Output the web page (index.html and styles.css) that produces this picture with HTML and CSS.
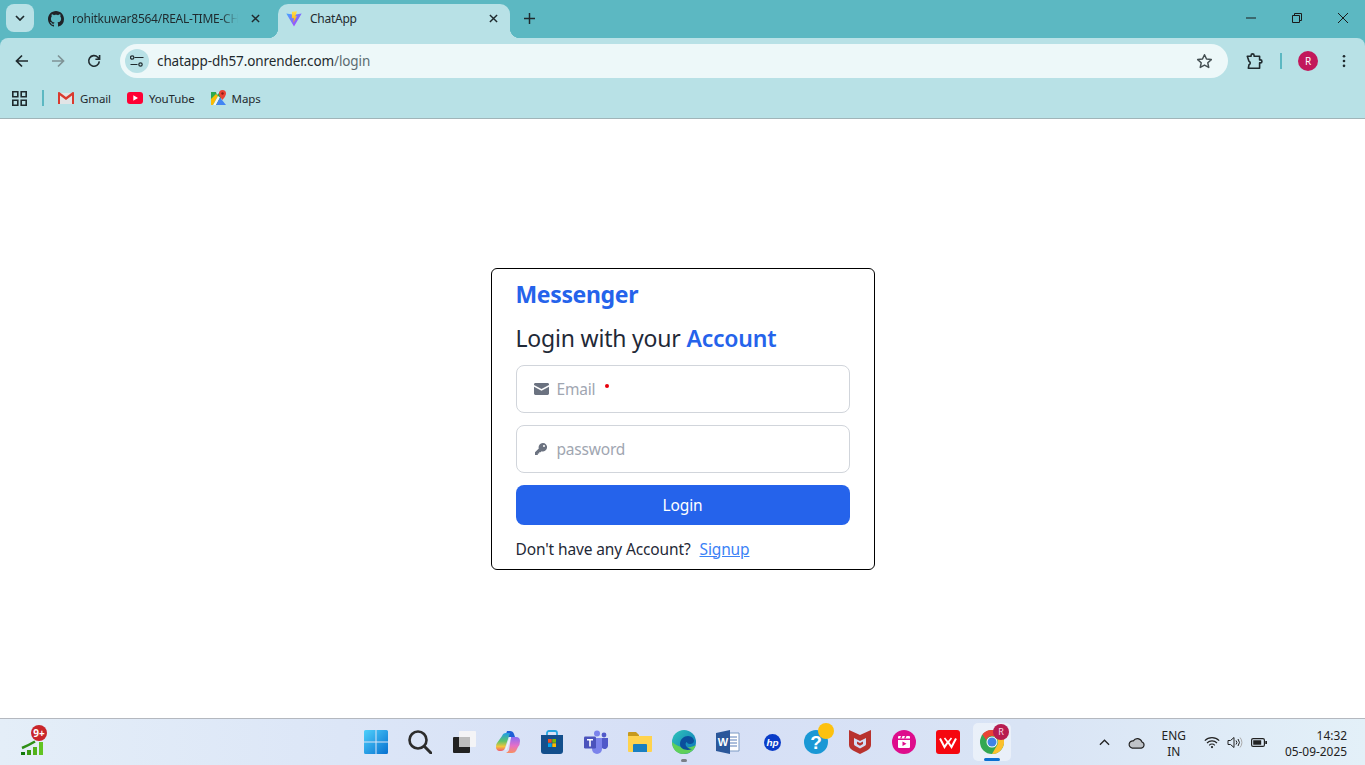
FILE: index.html
```html
<!DOCTYPE html>
<html lang="en">
<head>
<meta charset="utf-8">
<title>ChatApp</title>
<link rel="stylesheet" href="styles.css">
</head>
<body>
<header class="chrome">
  <div class="tabstrip">
    <button class="tabsearch"><svg width="10" height="6" viewBox="0 0 10 6"><path d="M1 1l4 4 4-4" fill="none" stroke="#1f2a2e" stroke-width="1.7"/></svg></button>
    <div class="tab">
      <svg class="fav" viewBox="0 0 16 16"><path fill="#1f2328" d="M8 0C3.58 0 0 3.58 0 8c0 3.54 2.29 6.53 5.47 7.59.4.07.55-.17.55-.38 0-.19-.01-.82-.01-1.49-2.01.37-2.53-.49-2.69-.94-.09-.23-.48-.94-.82-1.13-.28-.15-.68-.52-.01-.53.63-.01 1.08.58 1.23.82.72 1.21 1.87.87 2.33.66.07-.52.28-.87.51-1.07-1.78-.2-3.64-.89-3.64-3.95 0-.87.31-1.59.82-2.15-.08-.2-.36-1.02.08-2.12 0 0 .67-.21 2.2.82.64-.18 1.32-.27 2-.27s1.36.09 2 .27c1.53-1.04 2.2-.82 2.2-.82.44 1.1.16 1.92.08 2.12.51.56.82 1.27.82 2.15 0 3.07-1.87 3.75-3.65 3.95.29.25.54.73.54 1.48 0 1.07-.01 1.93-.01 2.2 0 .21.15.46.55.38A8.013 8.013 0 0016 8c0-4.42-3.58-8-8-8z"/></svg>
      <span class="tabtitle fade">rohitkuwar8564/REAL-TIME-CH</span>
      <svg class="close" viewBox="0 0 10 10"><path d="M1 1l8 8M9 1l-8 8" stroke="#1f2a2e" stroke-width="1.6"/></svg>
    </div>
    <div class="tab active">
      <svg class="fav" viewBox="0 0 16 16">
        <defs>
          <linearGradient id="vb" x1="0" y1="0" x2="1" y2="1"><stop offset="0" stop-color="#41a8ff"/><stop offset="1" stop-color="#bd34fe"/></linearGradient>
          <linearGradient id="vy" x1="0" y1="0" x2="0" y2="1"><stop offset="0" stop-color="#ffe14d"/><stop offset="1" stop-color="#ffa800"/></linearGradient>
        </defs>
        <path fill="url(#vb)" d="M.3 2.4L8 15.4 15.7 2.4 8.2 3.7z"/>
        <path fill="url(#vy)" d="M6 .8l4.9-.6-1.6 5.2 1.7-.3L7.3 12l.6-5.1-2 .3z"/>
      </svg>
      <span class="tabtitle">ChatApp</span>
      <svg class="close" viewBox="0 0 10 10"><path d="M1 1l8 8M9 1l-8 8" stroke="#1f2a2e" stroke-width="1.6"/></svg>
    </div>
    <svg class="newtab" viewBox="0 0 12 12"><path d="M6 0v12M0 6h12" stroke="#1f2a2e" stroke-width="1.6"/></svg>
    <div class="winbtns">
      <svg width="10" height="10" viewBox="0 0 10 10"><path d="M0 5h10" stroke="#1a1a1a"/></svg>
      <svg width="10" height="10" viewBox="0 0 10 10"><path d="M.5 2.5h7v7h-7zM2.5 2.5V.5h7v7h-2" fill="none" stroke="#1a1a1a"/></svg>
      <svg width="10" height="10" viewBox="0 0 10 10"><path d="M0 0l10 10M10 0L0 10" stroke="#1a1a1a"/></svg>
    </div>
  </div>
  <div class="toolbar">
    <div class="nav">
      <svg viewBox="0 0 14 14"><path d="M13 7H2M7 1.5L1.5 7 7 12.5" fill="none" stroke="#1f2a2e" stroke-width="1.7"/></svg>
      <svg viewBox="0 0 14 14"><path d="M1 7h11M7 1.5L12.5 7 7 12.5" fill="none" stroke="#7f9396" stroke-width="1.7"/></svg>
      <svg viewBox="0 0 14 14"><path d="M12.3 7.4A5.3 5.3 0 1 1 10.8 3.2L12.5 5M12.6 1v4.2H8.4" fill="none" stroke="#1f2a2e" stroke-width="1.6"/></svg>
    </div>
    <div class="omnibox">
      <span class="siteicon"><svg width="14" height="12" viewBox="0 0 14 12"><path d="M4.5 2.5h9M.5 9.5h7" stroke="#1f2a2e" stroke-width="1.2"/><circle cx="2.2" cy="2.5" r="1.7" fill="none" stroke="#1f2a2e" stroke-width="1.2"/><circle cx="10.5" cy="9.5" r="1.7" fill="none" stroke="#1f2a2e" stroke-width="1.2"/></svg></span>
      <span class="url">chatapp-dh57.onrender.com<span class="path">/login</span></span>
      <svg class="star" viewBox="0 0 16 16"><path d="M8 1.6l1.9 4.1 4.5.5-3.3 3 .9 4.4L8 11.4l-4 2.2.9-4.4-3.3-3 4.5-.5z" fill="none" stroke="#444f52" stroke-width="1.4" stroke-linejoin="round"/></svg>
    </div>
    <div class="tools">
      <svg class="ext" viewBox="0 0 16 16"><path d="M1.2 3h3.6V2.200a1.400 1.400 0 0 1 2.800 0V3h5.200v3.500h.8a1.400 1.400 0 0 1 0 2.800h-.8v5H2.200l.6-3.200a1.800 1.800 0 0 0 0-3.400z" fill="none" stroke="#1f2a2e" stroke-width="1.500" stroke-linejoin="round"/></svg>
      <i class="tooldiv"></i>
      <span class="avatar">R</span>
      <svg class="menu" viewBox="0 0 4 16"><circle cx="2" cy="2.500" r="1.500" fill="#1f2a2e"/><circle cx="2" cy="8" r="1.500" fill="#1f2a2e"/><circle cx="2" cy="13.500" r="1.500" fill="#1f2a2e"/></svg>
    </div>
  </div>
  <nav class="bookmarks">
    <svg class="apps" viewBox="0 0 15 15"><path d="M.8.8h5v5h-5zM9.200.8h5v5h-5zM.8 9.200h5v5h-5zM9.200 9.200h5v5h-5z" fill="none" stroke="#1f2a2e" stroke-width="1.600"/></svg>
    <i class="bmdiv"></i>
    <a class="bm"><svg class="gm" viewBox="0 0 16 12"><path fill="#e2e4e6" d="M1 1h14v11H1z"/><path fill="#d93a2f" d="M0 1C0 .2.900-.3 1.600.2L8 5 14.400.2C15.100-.3 16 .2 16 1v11h-2V3.600L8 8 2 3.600V12H0z"/></svg>Gmail</a>
    <a class="bm"><svg class="yt" viewBox="0 0 16 12"><rect width="16" height="12" rx="3" fill="#ff0033"/><path d="M6.300 3.300v5.400L11 6z" fill="#fff"/></svg>YouTube</a>
    <a class="bm maps"><svg viewBox="0 0 16 16"><path fill="#2ea84f" d="M0 2h10v13H0z"/><path fill="#fbbc04" d="M0 9l5-5 2 2-5 9H0z"/><path fill="#f4f4f4" d="M2 15l5-9 2 1.500L5 15z"/><path fill="#4285f4" d="M5 15l4-7.500L15 15z"/><path fill="#cfe0ea" d="M5 2h4L6 5z"/><path fill="#ea4335" d="M11.500 0a3.500 3.500 0 0 0-3.500 3.500C8 6 11.500 10 11.500 10S15 6 15 3.500A3.500 3.500 0 0 0 11.500 0z"/><circle cx="11.500" cy="3.500" r="1.200" fill="#8c1d18"/></svg>Maps</a>
  </nav>
</header>

<main class="page">
  <form class="card">
    <h1 class="brand">Messenger</h1>
    <h2 class="lead">Login with your <span class="accent">Account</span></h2>
    <label class="field">
      <svg class="ficon" viewBox="0 0 14 11"><path fill="#6b7280" d="M1.300 0h11.400C13.400 0 14 .6 14 1.300v.5L7 5.600 0 1.800v-.5C0 .6.600 0 1.300 0zM0 3.300l7 3.800 7-3.800v6.400c0 .7-.6 1.300-1.300 1.300H1.300C.6 11 0 10.400 0 9.700z"/></svg>
      <span class="ph">Email</span><i class="req"></i>
    </label>
    <label class="field">
      <svg class="ficon key" viewBox="0 0 12 12"><path fill="#6b7280" d="M7.800 0a4.200 4.200 0 0 0-4 5.400L0 9.200V12h2.800v-1.400h1.400V9.200h1.400l1-1A4.200 4.200 0 1 0 7.800 0zM9 4a1 1 0 1 1 0-2 1 1 0 0 1 0 2z"/></svg>
      <span class="ph">password</span>
    </label>
    <button class="submit" type="button">Login</button>
    <p class="foot">Don't have any Account?<a class="signup">Signup</a></p>
  </form>
</main>

<footer class="taskbar">
  <div class="widget">
    <svg width="24" height="15" viewBox="0 0 24 15"><path d="M1 8Q8 5 14 1.500" fill="none" stroke="#2f8f16" stroke-width="2.500"/><path fill="#117a0a" d="M0 12h4v3H0z"/><path fill="#3a9a14" d="M6 10h4v5H6z"/><path fill="#52b21c" d="M12 7h4v8h-4z"/><path fill="#62c422" d="M18 2h4v13h-4z"/></svg>
    <span class="wbadge">9+</span>
  </div>
  <div class="apps-row">
    <span class="slot"><svg viewBox="0 0 24 24"><defs><linearGradient id="w" x1="0" y1="0" x2="1" y2="1"><stop offset="0" stop-color="#4fd0fb"/><stop offset="1" stop-color="#0670d0"/></linearGradient></defs><path fill="url(#w)" d="M0 1.500A1.500 1.500 0 0 1 1.500 0h10v11.500H0zM12.500 0h10A1.500 1.500 0 0 1 24 1.500v10H12.500zM0 12.500h11.500V24h-10A1.500 1.500 0 0 1 0 22.500zM12.500 12.500H24v10a1.500 1.500 0 0 1-1.500 1.500h-10z"/></svg></span>
    <span class="slot"><svg viewBox="0 0 24 24"><circle cx="10" cy="10" r="8.500" fill="none" stroke="#2c2c2c" stroke-width="2.600"/><path d="M16.500 16.500L23 23" stroke="#2c2c2c" stroke-width="3" stroke-linecap="round"/></svg></span>
    <span class="slot"><svg viewBox="0 0 24 24"><rect x="7" y="1" width="17" height="16" rx="1" fill="#f4f4f6"/><rect x="1" y="7" width="17" height="16" rx="1" fill="#222"/><rect x="7" y="7" width="11" height="10" fill="#bdbdbd"/></svg></span>
    <span class="slot"><svg viewBox="0 0 24 24"><defs><linearGradient id="c1" x1="0" y1="0" x2="0" y2="1"><stop offset="0" stop-color="#1f9ce8"/><stop offset=".45" stop-color="#5cc46a"/><stop offset=".75" stop-color="#f4c53a"/><stop offset="1" stop-color="#ee5a6f"/></linearGradient><linearGradient id="c2" x1="0" y1="0" x2="0" y2="1"><stop offset="0" stop-color="#8a6cf2"/><stop offset=".55" stop-color="#e56fc8"/><stop offset="1" stop-color="#f8905f"/></linearGradient></defs><path fill="#1d5fd6" d="M11 1h3q3 0 4 3l1 3h-7l-2-3z"/><path fill="url(#c1)" d="M6 6q1-3 4-3h4l-5 15q-1 3-4 3H3q-3-1-3-4t1-4z"/><path fill="url(#c2)" d="M15 7h5q4 0 4 4t-2 6l-2 4q-1 2-4 2h-6q2-1 3-3z"/><path fill="#f6f3fb" d="M14 7h1l-4.500 13H9z"/></svg></span>
    <span class="slot"><svg viewBox="0 0 24 24"><path d="M7 6V3a2 2 0 0 1 2-2h6a2 2 0 0 1 2 2v3" fill="none" stroke="#25a6e0" stroke-width="1.800"/><path fill="#134f8c" d="M1 5h22v16a3 3 0 0 1-3 3H4a3 3 0 0 1-3-3z"/><path fill="#f25022" d="M8 9h3.700v3.700H8z"/><path fill="#7fba00" d="M12.300 9H16v3.700h-3.700z"/><path fill="#00a4ef" d="M8 13.300h3.700V17H8z"/><path fill="#ffb900" d="M12.300 13.300H16V17h-3.700z"/></svg></span>
    <span class="slot"><svg viewBox="0 0 24 24"><circle cx="13" cy="3.500" r="3" fill="#7b83eb"/><circle cx="20" cy="5" r="2.400" fill="#5059c9"/><path fill="#7b83eb" d="M8 8h10v11a5 5 0 0 1-10 0z"/><path fill="#5059c9" d="M18 8h6v8a3.500 3.500 0 0 1-6 2z"/><rect y="6.500" width="12" height="12" rx="1.200" fill="#4b53bc"/><path fill="#fff" d="M3 9h6v1.500H6.800v6H5.200v-6H3z"/></svg></span>
    <span class="slot"><svg viewBox="0 0 24 24"><path fill="#c79a1e" d="M0 3a1 1 0 0 1 1-1h7l3 3v4H0z"/><path fill="#ffd34e" d="M0 6h24v15a1 1 0 0 1-1 1H1a1 1 0 0 1-1-1z"/><path fill="#1a7fc1" d="M5 15a1 1 0 0 1 1-1h12a1 1 0 0 1 1 1v7H5z"/></svg></span>
    <span class="slot mark"><svg viewBox="0 0 24 24"><defs><linearGradient id="e1" x1="0" y1="0" x2="1" y2="1"><stop offset="0" stop-color="#2fc7b8"/><stop offset="1" stop-color="#0b6fbd"/></linearGradient></defs><circle cx="12" cy="12" r="12" fill="url(#e1)"/><path fill="#5fd05a" d="M11 24C5 24 0 19 0 12 6 17 14 20 24 15c-2 6-7 9-13 9z"/><path fill="#0b4f9c" d="M8 14c0-5 4-8 8-8 4 0 6 3 6 5 0 2-2 3-4 3-2 0-3-1-3-2-3 1-1 7 5 7-4 2-12 1-12-5z"/></svg></span>
    <span class="slot"><svg viewBox="0 0 24 24"><path fill="#fff" d="M9 3h14v18H9z" stroke="#7d9ac4"/><path d="M13 7h8M13 10h8M13 13h8M13 16h8" stroke="#5b7fb8"/><path fill="#2b579a" d="M0 3l14-3v24L0 21z"/><text x="7" y="16" class="wordw">W</text></svg></span>
    <span class="slot"><svg class="hpicon" viewBox="0 0 24 24"><circle cx="12" cy="12" r="12" fill="#0a3cc8"/><text x="12" y="17" class="hp">hp</text></svg></span>
    <span class="slot"><svg viewBox="0 0 24 24"><circle cx="12" cy="12" r="12" fill="#1a98d5"/><text x="12" y="19" class="helpq">?</text></svg><i class="yellowdot"></i></span>
    <span class="slot"><svg viewBox="0 0 24 24"><path fill="#b8322e" d="M1 0l11 5L23 0v15q0 3-4 5.500L12 24l-7-3.500Q1 18 1 15z"/><path fill="#d4ddf3" d="M6 8l6 3 6-3v6q0 1-1 1.800L12 18.500l-5-2.700Q6 15 6 14z"/><path fill="#b8322e" d="M9 11.500l3 1.500 3-1.500v2.500l-3 1.800L9 14z"/></svg></span>
    <span class="slot"><svg viewBox="0 0 24 24"><circle cx="12" cy="12" r="12" fill="#de0d8c"/><path fill="#fff" d="M6 10h12v7a1 1 0 0 1-1 1H7a1 1 0 0 1-1-1zM6 8.500V7a1 1 0 0 1 1-1h10a1 1 0 0 1 1 1v1.500z"/><path fill="#de0d8c" d="M10.500 11.500v4.500l4-2.200zM9 6h1.500l-1 2.500H8zM13 6h1.500l-1 2.500H12z"/></svg></span>
    <span class="slot"><svg viewBox="0 0 24 24"><rect width="24" height="24" rx="3" fill="#f5070f"/><path d="M4 8.500l4.500 8.500 3.500-5 3.500 5L20 8.500" fill="none" stroke="#fff" stroke-width="2"/><path d="M8.500 8l3.500 4.500L15.500 8" fill="none" stroke="#fff" stroke-width="1.600"/></svg></span>
    <span class="slot current"><svg viewBox="0 0 24 24"><circle cx="12" cy="12" r="12" fill="#34a853"/><path fill="#ea4335" d="M12 0a12 12 0 0 1 10.400 6H12a6 6 0 0 0-5.700 4.200L2.400 4.300A12 12 0 0 1 12 0z"/><path fill="#fbc02d" d="M22.400 6A12 12 0 0 1 12 24l5.200-9A6 6 0 0 0 12 6z"/><circle cx="12" cy="12" r="5.500" fill="#fff"/><circle cx="12" cy="12" r="4.500" fill="#3f84e5"/></svg><span class="chromebadge">R</span></span>
  </div>
  <div class="tray">
    <svg class="t-up" viewBox="0 0 12 7"><path d="M1 6l5-5 5 5" fill="none" stroke="#222" stroke-width="1.400"/></svg>
    <svg class="t-cloud" viewBox="0 0 16 11"><path d="M4 10.300h8.500a3 3 0 0 0 .6-5.800A4.500 4.500 0 0 0 5 3.500a3.400 3.400 0 0 0-1 6.800z" fill="#bfc3c8" stroke="#222" stroke-width="1.100"/></svg>
    <div class="lang"><span>ENG</span><span>IN</span></div>
    <svg class="t-wifi" viewBox="0 0 16 12"><path d="M.8 4.200a10 10 0 0 1 14.400 0M3 6.500a7 7 0 0 1 10 0M5.200 8.800a3.800 3.800 0 0 1 5.600 0" fill="none" stroke="#222" stroke-width="1.100"/><circle cx="8" cy="10.600" r="1.100" fill="#222"/></svg>
    <svg class="t-vol" viewBox="0 0 16 13"><path d="M1 4.500h2.500L7 1.500v10l-3.500-3H1z" fill="none" stroke="#222"/><path d="M9 4.500a3 3 0 0 1 0 4M11 3a5.500 5.500 0 0 1 0 7" fill="none" stroke="#222"/><path d="M13 1.500a7.500 7.500 0 0 1 0 10" fill="none" stroke="#aaa"/></svg>
    <svg class="t-bat" viewBox="0 0 16 9"><rect x=".6" y=".6" width="12.800" height="7.800" rx="1.500" fill="none" stroke="#222" stroke-width="1.200"/><path fill="#222" d="M2.200 2.200h8v4.600h-8zM14.300 3H16v3h-1.700z"/></svg>
    <div class="clock"><span>14:32</span><span>05-09-2025</span></div>
  </div>
</footer>
</body>
</html>
```
FILE: styles.css
```css
* { box-sizing: border-box; }
html, body { margin: 0; height: 100%; }
body {
  display: flex;
  flex-direction: column;
  height: 765px;
  overflow: hidden;
  background: #fff;
  font-family: "Noto Sans", "Liberation Sans", sans-serif;
  color: #1f2937;
}

/* browser frame */
.chrome { background: #5cb8c2; flex: none; }
.tabstrip { display: flex; align-items: flex-start; height: 38px; padding: 4px 0 0 6px; position: relative; }
.tabsearch {
  width: 28px; height: 28px; border: 0; border-radius: 8px; background: #b8e1e6;
  display: flex; align-items: center; justify-content: center; padding: 0;
}
.tab {
  display: flex; align-items: center; height: 34px; font-size: 12px; color: #1f2a2e; position: relative;
  width: 244px; padding: 0 18px 5px 14px;
}
.tab .fav { width: 16px; height: 16px; flex: none; margin-right: 8px; }
.tabtitle { flex: 1; white-space: nowrap; overflow: hidden; letter-spacing: -.25px; }
.fade {
  flex: none; width: 166px; margin-right: auto;
  -webkit-mask-image: linear-gradient(90deg, #000 90%, transparent);
  mask-image: linear-gradient(90deg, #000 90%, transparent);
}
.close { width: 9px; height: 9px; flex: none; }
.tab.active {
  width: 232px; background: #b8e1e6; border-radius: 10px 10px 0 0; padding: 0 12px 5px 8px;
}
.tab.active::before, .tab.active::after {
  content: ""; position: absolute; bottom: 0; width: 10px; height: 10px;
}
.tab.active::before { left: -10px; background: radial-gradient(circle at 0 0, transparent 10px, #b8e1e6 10.5px); }
.tab.active::after { right: -10px; background: radial-gradient(circle at 100% 0, transparent 10px, #b8e1e6 10.5px); }
.newtab { width: 11px; height: 11px; margin: 9px 0 0 14px; }
.winbtns { margin-left: auto; display: flex; gap: 36px; padding: 9px 17px 0 0; }
.winbtns svg { display: block; }

.toolbar {
  display: flex; align-items: center; height: 44px; background: #b8e1e6;
  border-radius: 8px 8px 0 0; padding: 2px 12px 0 15px;
}
.nav { display: flex; gap: 22px; width: 105px; flex: none; }
.nav svg { width: 14px; height: 14px; display: block; }
.omnibox {
  flex: 1; height: 34px; border-radius: 17px; background: #edf8f9; display: flex; align-items: center; padding: 0 15px 0 5px;
}
.siteicon { width: 24px; height: 24px; border-radius: 50%; background: #b8e1e6; display: flex; align-items: center; justify-content: center; flex: none; }
.url { flex: 1; font-size: 13.5px; margin-left: 8px; color: #1f2a2e; letter-spacing: -.1px; }
.path { color: #5b6b70; }
.star { width: 17px; height: 17px; }
.tools { display: flex; align-items: center; width: 125px; flex: none; padding-left: 18px; }
.ext { width: 17px; height: 17px; }
.tooldiv { width: 2px; height: 16px; background: #5cb8c2; margin-left: 17px; }
.avatar {
  width: 20px; height: 20px; border-radius: 50%; background: #c2185b; color: #fff; font-size: 10px; display: flex; align-items: center; justify-content: center; margin-left: 16px;
}
.menu { width: 4px; height: 14px; margin-left: 24px; }

.bookmarks {
  display: flex; align-items: center; height: 37px; background: #b8e1e6; padding: 0 0 4px 12px; border-bottom: 1px solid #a0b4b8;
}
.apps { width: 15px; height: 15px; }
.bmdiv { width: 2px; height: 16px; background: #5cb8c2; margin: 0 14px 0 15px; }
.bm { display: flex; align-items: center; font-size: 11.5px; color: #1f2a2e; margin-right: 16px; letter-spacing: -.12px; }
.bm svg { width: 16px; height: 16px; margin-right: 6px; }
.maps svg { margin-right: 5px; }

/* login page */
.page { flex: 1; display: flex; align-items: center; justify-content: center; background: #fff; }
.card {
  width: 384px; height: 302px; border: 1px solid #000; border-radius: 6px; padding: 10px 24px 8px 24px;
  display: flex; flex-direction: column; gap: 12px;
}
.brand { margin: -1px 0 0; font-size: 23px; line-height: 32px; font-weight: 700; color: #2563eb; letter-spacing: -.35px; }
.lead { margin: 0 0 -1px; font-size: 23px; line-height: 32px; font-weight: 400; letter-spacing: -.2px; }
.accent { color: #2563eb; font-weight: 600; }
.field {
  height: 48px; border: 1px solid #d1d5db; border-radius: 8px; display: flex; align-items: center; padding: 0 16px 0 17px; flex: none;
}
.ficon { width: 15px; height: 12px; flex: none; margin-right: 8px; }
.ficon.key { width: 12px; height: 12px; margin-right: 10px; margin-left: 1px; }
.ph { font-size: 15.5px; color: #a0a6b1; letter-spacing: -.2px; }
.req { width: 4px; height: 4px; border-radius: 50%; background: #e7000b; margin: -6px 0 0 10px; }
.submit {
  height: 40px; border: 0; border-radius: 8px; background: #2563eb; color: #fff; font: inherit; font-size: 15.5px; flex: none; letter-spacing: -.13px;
}
.foot { margin: 0; font-size: 15.5px; line-height: 24px; letter-spacing: -.13px; color: #1f2937; }
.signup { color: #3b82f6; text-decoration: underline; margin-left: 9px; }

/* taskbar */
.taskbar {
  flex: none; height: 47px; display: grid; grid-template-columns: 1fr auto 1fr; align-items: center; padding-left: 3px;
  border-top: 1px solid #b4b8bf;
  background: linear-gradient(90deg, #e4eef8 0, #dce6f7 25%, #d6dff6 50%, #d9e4f5 75%, #e3f0f8 100%);
}
.widget { position: relative; padding: 17px 0 0 18px; height: 100%; }
.widget svg { display: block; margin-top: 4px; }
.wbadge {
  position: absolute; left: 28px; top: 6px; width: 16px; height: 16px; border-radius: 50%; background: #c9252a; color: #fff;
  font-size: 10px; font-weight: 700; line-height: 16px; text-align: center;
}
.apps-row { display: flex; }
.slot { width: 44px; height: 38px; display: flex; align-items: center; justify-content: center; position: relative; }
.slot svg { width: 24px; height: 24px; display: block; }
.slot .hpicon { width: 17px; height: 17px; }
.mark::after { content: ""; position: absolute; left: 19px; bottom: -1px; width: 6px; height: 3px; border-radius: 2px; background: #7a7f87; }
.current::before { content: ""; position: absolute; left: 3px; top: 0; width: 38px; height: 38px; border-radius: 5px; background: rgba(255,255,255,.45); }
.current svg { position: relative; }
.current::after { content: ""; position: absolute; left: 14px; bottom: 0; width: 16px; height: 3px; border-radius: 2px; background: #0a6fd0; }
.wordw { font: 700 11px "Liberation Sans", sans-serif; fill: #fff; text-anchor: middle; }
.hp { font: italic 700 14px "Liberation Sans", sans-serif; fill: #fff; text-anchor: middle; }
.helpq { font: 700 19px "Liberation Sans", sans-serif; fill: #fff; text-anchor: middle; }
.yellowdot { position: absolute; left: 24px; top: 0; width: 16px; height: 16px; border-radius: 50%; background: #fdc10e; }
.chromebadge {
  position: absolute; left: 23px; top: 1px; width: 16px; height: 16px; border-radius: 50%; background: #b71c50; color: #f7dce6;
  font-size: 9px; text-align: center; line-height: 16px;
}
.tray { display: flex; align-items: center; justify-content: flex-end; padding: 1px 18px 0 0; font-size: 11.9px; color: #222; }
.t-up { width: 11px; height: 7px; margin-right: 18px; }
.t-cloud { width: 17px; height: 12px; margin-right: 17px; }
.lang, .clock { display: flex; flex-direction: column; align-items: center; line-height: 16px; }
.lang { margin-right: 18px; }
.t-wifi { width: 16px; height: 13px; margin-right: 7px; }
.t-vol { width: 16px; height: 13px; margin-right: 8px; }
.t-bat { width: 16px; height: 9px; margin-right: 18px; }
.clock { align-items: flex-end; }
```
